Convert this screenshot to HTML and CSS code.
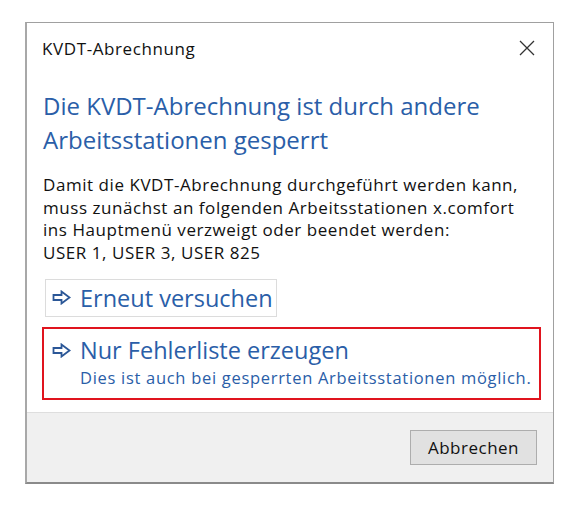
FILE: index.html
```html
<!DOCTYPE html>
<html lang="de">
<head>
    <meta charset="UTF-8">
    <title>KVDT-Abrechnung</title>
    <link rel="stylesheet" href="styles.css">
</head>
<body>
    <div class="dialog">
        <div class="titlebar">
            <span class="title">KVDT-Abrechnung</span>
            <svg class="close" width="16" height="16" viewBox="0 0 16 16">
                <path d="M1 1 L15 15 M15 1 L1 15" stroke="#333" stroke-width="1.3" fill="none"/>
            </svg>
        </div>
        <div class="content">
            <h1>Die KVDT-Abrechnung ist durch andere Arbeitsstationen gesperrt</h1>
            <p class="message">Damit die KVDT-Abrechnung durchgeführt werden kann,<br>
                muss zunächst an folgenden Arbeitsstationen x.comfort<br>
                ins Hauptmenü verzweigt oder beendet werden:<br>
                USER 1, USER 3, USER 825</p>
            <div class="link retry">
                <svg class="arrow" width="19" height="15" viewBox="0 0 19 15">
                    <polygon points="1.5,5 9.5,5 9.5,1.5 17.5,7.5 9.5,13.5 9.5,10 1.5,10" fill="none" stroke="#2b5797" stroke-width="1.8"/>
                </svg>
                <span class="link-text">Erneut versuchen</span>
            </div>
            <div class="link errors">
                <div class="link-row">
                    <svg class="arrow" width="19" height="15" viewBox="0 0 19 15">
                        <polygon points="1.5,5 9.5,5 9.5,1.5 17.5,7.5 9.5,13.5 9.5,10 1.5,10" fill="none" stroke="#2b5797" stroke-width="1.8"/>
                    </svg>
                    <span class="link-text">Nur Fehlerliste erzeugen</span>
                </div>
                <div class="link-note">Dies ist auch bei gesperrten Arbeitsstationen möglich.</div>
            </div>
        </div>
        <div class="footer">
            <button class="cancel">Abbrechen</button>
        </div>
    </div>
</body>
</html>
```

FILE: styles.css
```css
body {
    margin: 0;
    padding: 22px 0 0 25px;
    background-color: #fff;
    font-family: "Open Sans", "Noto Sans", sans-serif;
}
.dialog {
    width: 526px;
    background-color: #fff;
    border: 1px solid #a0a0a0;
    border-left: 2px solid #a8a8a8;
    border-bottom: 2px solid #8a8a8a;
}
.titlebar {
    display: flex;
    justify-content: space-between;
    align-items: center;
    height: 50px;
    padding: 0 18px 0 15px;
}
.title {
    font-size: 17px;
    letter-spacing: 0.6px;
    color: #111;
}
.content {
    padding: 16px 12px 12px 16px;
}
h1 {
    margin: 0 0 17px 0;
    font-size: 24px;
    font-weight: normal;
    line-height: 34px;
    color: #2a5ea8;
}
.message {
    margin: 0 0 14px 0;
    font-size: 17px;
    letter-spacing: 0.55px;
    line-height: 22.7px;
    color: #111;
}
.link {
    color: #2a5ea8;
}
.retry {
    display: inline-flex;
    align-items: center;
    gap: 9px;
    height: 36px;
    padding: 0 3px 0 6px;
    border: 1px solid #dcdcdc;
    margin-left: 2px;
}
.errors {
    margin: 10px 0 0 -1px;
    padding: 5px 6px 9px 8px;
    border: 2px solid #e0141e;
}
.link-row {
    display: flex;
    align-items: center;
    gap: 9px;
    height: 33px;
}
.link-text {
    font-size: 23.5px;
}
.link-note {
    padding-left: 28px;
    font-size: 16.5px;
    letter-spacing: 0.7px;
    line-height: 22px;
    white-space: nowrap;
}
.footer {
    display: flex;
    justify-content: flex-end;
    padding: 17px 16px 17px 0;
    background-color: #f0f0f0;
    border-top: 1px solid #dedede;
}
.cancel {
    width: 127px;
    height: 35px;
    font-family: inherit;
    font-size: 17px;
    letter-spacing: 0.5px;
    color: #111;
    background-color: #e1e1e1;
    border: 1px solid #adadad;
}
```
